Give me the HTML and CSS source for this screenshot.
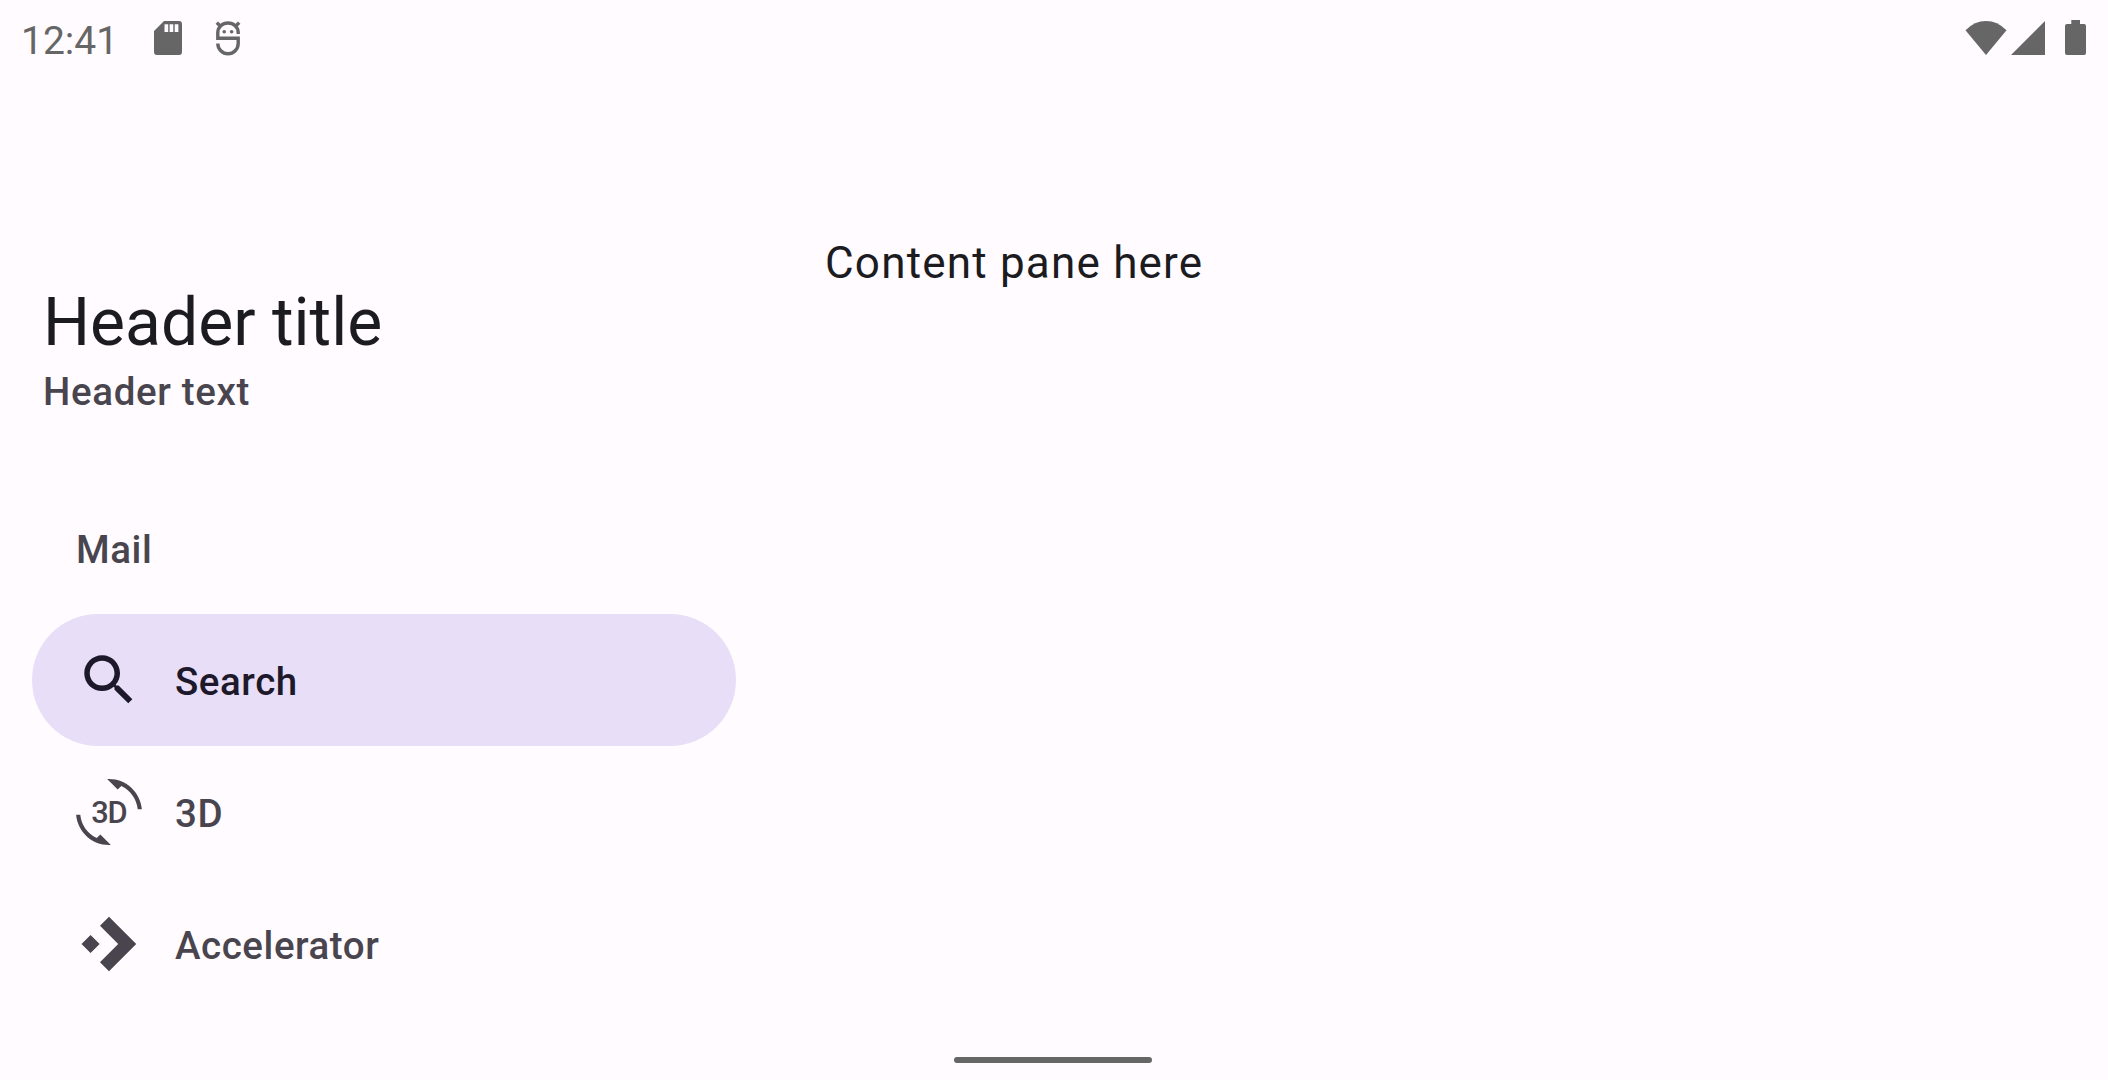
FILE: index.html
```html
<!DOCTYPE html>
<html lang="en">
<head>
<meta charset="utf-8">
<title>Navigation drawer</title>
<link rel="stylesheet" href="styles.css">
</head>
<body>
<div class="screen">
  <header class="status-bar">
    <div class="status-left">
      <span class="clock">12:41</span>
      <svg class="sd-icon" viewBox="0 0 28 34"><path fill-rule="evenodd" d="M10 0H25Q28 0 28 3V31Q28 34 25 34H3Q0 34 0 31V10ZM10.5 3.3V11H14.2V3.3ZM15.6 3.3V11H19.3V3.3ZM20.7 3.3V11H24.4V3.3Z"/></svg>
      <svg class="debug-icon" viewBox="0 0 26 35"><path class="line" d="M23.2 13V11.5A10.2 9.5 0 0 0 2.8 11.5V17.3H23.2V22.5A10.2 10.3 0 0 1 2.8 22.5M5.2 5 1.8 1.6M20.8 5 24.2 1.6"/><circle cx="9.2" cy="10.8" r="1.8"/><circle cx="16.6" cy="10.8" r="1.8"/></svg>
    </div>
    <div class="status-right">
      <svg class="wifi-icon" viewBox="0 0 42 34"><path d="M21 34 .5 9.3Q9.5 0 21 0T41.5 9.3Z"/></svg>
      <svg class="signal-icon" viewBox="0 0 34 34"><path d="M0 34 34 0V34Z"/></svg>
      <svg class="battery-icon" viewBox="0 0 21 35"><path d="M6.3 0H15V4H19Q21 4 21 6V33Q21 35 19 35H2Q0 35 0 33V6Q0 4 2 4H6.3Z"/></svg>
    </div>
  </header>
  <div class="body">
    <nav class="drawer">
      <div class="drawer-header">
        <h1 class="title">Header title</h1>
        <p class="subtitle">Header text</p>
      </div>
      <ul class="menu">
        <li class="item"><span class="label">Mail</span></li>
        <li class="item selected">
          <svg class="icon" viewBox="0 0 24 24"><path d="M15.5 14h-.79l-.28-.27C15.41 12.59 16 11.11 16 9.5 16 5.91 13.09 3 9.5 3S3 5.91 3 9.5 5.91 16 9.5 16c1.61 0 3.09-.59 4.23-1.57l.27.28v.79l5 4.99L20.49 19l-4.99-5zm-6 0C7.01 14 5 11.99 5 9.5S7.01 5 9.5 5 14 7.01 14 9.5 11.99 14 9.5 14z"/></svg>
          <span class="label">Search</span>
        </li>
        <li class="item">
          <svg class="icon" viewBox="0 0 24 24"><path d="M7.52 21.48C4.25 19.94 1.91 16.76 1.55 13H.05C.56 19.16 5.71 24 12 24l.66-.03-3.81-3.81zM12 0l-.66.03 3.81 3.81 1.33-1.33c3.27 1.55 5.61 4.72 5.97 8.49h1.5C23.44 4.84 18.29 0 12 0z"/><text class="icon-text" x="5.5" y="16">3D</text></svg>
          <span class="label">3D</span>
        </li>
        <li class="item">
          <svg class="icon" viewBox="0 0 24 24"><path d="M12 2.1 8.72 5.38 15.34 12 8.72 18.62 12 21.9 21.9 12ZM5.3 8.7 2 12 5.3 15.3 8.6 12Z"/></svg>
          <span class="label">Accelerator</span>
        </li>
      </ul>
    </nav>
    <main class="content">Content pane here</main>
  </div>
  <footer class="gesture-area"><div class="gesture-bar"></div></footer>
</div>
</body>
</html>
```
FILE: styles.css
```css
* { box-sizing: border-box; }

body {
  margin: 0;
  background: #fffbfe;
  color: #1c1b1f;
  font-family: Roboto, sans-serif;
}

.screen {
  display: flex;
  flex-direction: column;
  width: 2108px;
  height: 1080px;
  overflow: hidden;
}

.status-bar {
  display: flex;
  justify-content: space-between;
  height: 66px;
  padding: 0 22px 0 21px;
  color: #666;
  fill: #666;
}

.status-left, .status-right { display: flex; align-items: flex-start; }
.clock { width: 132.5px; padding-top: 19px; font-size: 39px; line-height: 45px; }
.sd-icon { width: 28px; height: 34px; margin-top: 21px; }
.debug-icon { width: 26px; height: 35px; margin: 21px 0 0 33.5px; }
.line { fill: none; stroke: #666; stroke-width: 3.4; }
.wifi-icon { width: 42px; height: 34px; margin-top: 21px; }
.signal-icon { width: 34px; height: 34px; margin: 21px 0 0 4px; }
.battery-icon { width: 21px; height: 35px; margin: 20px 0 0 20px; }

.body { display: flex; flex: 1; }

.drawer { width: 748px; padding: 213px 12px 0 32px; }
.drawer-header { height: 203px; padding-left: 11px; }

.title {
  margin: 0;
  font-size: 66px;
  font-weight: 400;
  line-height: 88px;
}

.subtitle {
  margin: 0;
  color: #49454f;
  font-size: 38.5px;
  font-weight: 500;
  line-height: 50px;
  letter-spacing: 0.65px;
}

.menu { margin: 0; padding: 0; list-style: none; }

.item {
  display: flex;
  align-items: center;
  gap: 33px;
  height: 132px;
  padding: 0 44px;
  border-radius: 66px;
  color: #49454f;
  fill: currentColor;
  font-size: 38.5px;
  font-weight: 500;
  letter-spacing: 0.55px;
}

.selected { background: #e8def8; color: #1d192b; }
.label { padding-top: 2px; }
.icon { width: 66px; height: 66px; }
.icon-text { font-size: 11.2px; letter-spacing: -0.45px; }

.content {
  flex: 1;
  padding: 171px 0 0 77px;
  font-size: 44px;
  line-height: 52px;
  letter-spacing: 1.2px;
}

.gesture-area { display: flex; justify-content: center; height: 27px; padding-right: 2px; }
.gesture-bar { width: 198px; height: 6px; margin-top: 4px; border-radius: 3px; background: #666; }
```
